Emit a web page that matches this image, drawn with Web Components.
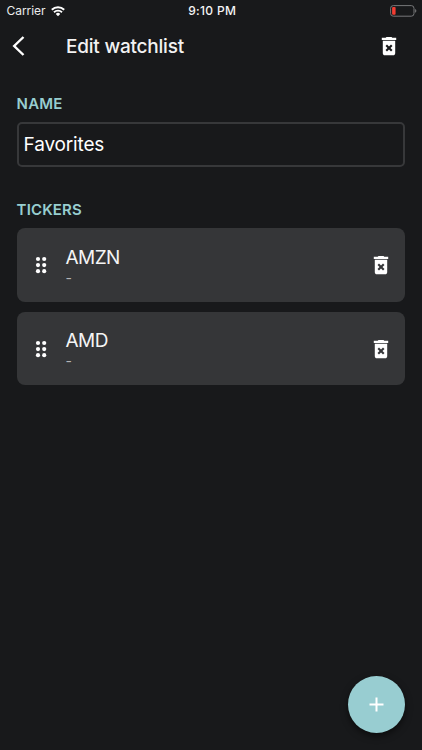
<!DOCTYPE html>
<html lang="en"><head><meta charset="utf-8"><title>Edit watchlist</title>
<style>body{margin:0;background:#18191b}</style></head><body>
<watchlist-screen></watchlist-screen>
<script>
const define=(name,html)=>customElements.define(name,class extends HTMLElement{
  constructor(){super();this.attachShadow({mode:'open'}).innerHTML=html;}
});
define('delete-icon',`<style>:host{display:block;width:24px;height:24px}svg{display:block}</style>
<svg width="24" height="24" viewBox="0 0 24 24" fill="#fff"><path d="M15.3 3.8l-.8-.8h-5l-.8.8H4.8v2.3h14.4V3.8z"/><path fill-rule="evenodd" d="M5.8 6.7V19.2c0 1.1.9 2.1 2 2.1h8.4c1.1 0 2-1 2-2.1V6.7zM8.5 12l1.5-1.5 2 2 2-2 1.5 1.5-2 2 2 2-1.5 1.5-2-2-2 2-1.5-1.5 2-2z"/></svg>`);
define('status-bar',`<style>
:host{display:grid;grid-template-columns:1fr auto 1fr;align-items:center;height:22px;padding:0 5px 0 6.5px;box-sizing:border-box;font-size:12px;line-height:22px;color:#ececec}
.l{display:flex;align-items:center;gap:5.5px}.c{letter-spacing:-.04px}.t{font-weight:500;font-size:12px;letter-spacing:.35px;color:#f4f4f4;padding-left:1px}
.b{justify-self:end}svg{display:block}</style>
<div class="l"><span class="c">Carrier</span><svg width="14" height="11" viewBox="0 0 14 11" fill="none" stroke="#fff" stroke-width="1.9"><path d="M.8 3.7a8.9 8.9 0 0 1 12.4 0M3 6.2a5.8 5.8 0 0 1 8 0"/><path d="M7 10.2L4.8 7.9a3.2 3.2 0 0 1 4.4 0z" fill="#fff" stroke="none"/></svg></div>
<span class="t">9:10 PM</span>
<svg class="b" width="27" height="12" viewBox="0 0 27 12"><rect x=".6" y=".6" width="23.4" height="10.6" rx="2.7" fill="none" stroke="#77787a"/><rect x="2.1" y="2.1" width="3.5" height="7.6" rx="1" fill="#f23c32"/><path d="M25.1 4.1c1.7.4 1.7 3.2 0 3.6z" fill="#77787a"/></svg>`);
define('nav-bar',`<style>
:host{display:flex;align-items:center;height:48px;padding:0 21px 0 12px;box-sizing:border-box}
h1{margin:0 0 0 41px;padding-top:2px;flex:1;font-size:19px;line-height:24px;font-weight:500;color:#f2f2f2;letter-spacing:-.22px}</style>
<svg width="13" height="20" viewBox="0 0 13 20" fill="none" stroke="#fff" stroke-width="2.4"><path d="M11.5 1L2.2 10l9.3 9"/></svg>
<h1><slot></slot></h1><delete-icon></delete-icon>`);
define('section-label',`<style>:host{display:block;font-size:15px;line-height:20px;font-weight:600;color:#97ced0;letter-spacing:.15px}</style><slot></slot>`);
define('text-field',`<style>:host{display:flex;align-items:center;box-sizing:border-box;height:45px;border:2px solid #37383a;border-radius:5px;padding:0 5px;font-size:19px;color:#fff;letter-spacing:-.16px}</style><slot></slot>`);
define('ticker-card',`<style>
:host{display:flex;align-items:center;box-sizing:border-box;height:73.5px;padding:0 12px 0 18px;border-radius:8px;background:#353638}
.n{flex:1;margin-left:18px}.s{font-size:19px;line-height:25px;color:#f4f4f4;letter-spacing:-.6px}.d{font-size:14px;line-height:16px;color:#b4b5b7}svg{display:block}</style>
<svg width="13" height="18" viewBox="0 0 13 18" fill="#fff"><circle cx="3" cy="3" r="2.1"/><circle cx="9.2" cy="3" r="2.1"/><circle cx="3" cy="9.1" r="2.1"/><circle cx="9.2" cy="9.1" r="2.1"/><circle cx="3" cy="15.2" r="2.1"/><circle cx="9.2" cy="15.2" r="2.1"/></svg>
<div class="n"><div class="s"><slot></slot></div><div class="d"><slot name="detail"></slot></div></div><delete-icon></delete-icon>`);
define('add-button',`<style>:host{display:grid;place-items:center;width:57px;height:57px;border-radius:50%;background:#98cdd1;box-shadow:0 3px 7px #0008}</style>
<svg width="15" height="15" viewBox="0 0 15 15" stroke="#fff" stroke-width="2"><path d="M7.5 .5v14M.5 7.5h14"/></svg>`);
define('watchlist-screen',`<style>
:host{display:flex;flex-direction:column;position:relative;width:422px;height:750px;background:#18191b;font-family:Inter,"Liberation Sans",sans-serif;overflow:hidden}
main{padding:23.5px 16.6px 0 16.6px;display:flex;flex-direction:column}
text-field{margin-top:8.9px}.tk{margin-top:32.6px}.cards{display:grid;gap:10px;margin-top:8.3px}
add-button{position:absolute;right:17px;bottom:16.7px}</style>
<status-bar></status-bar><nav-bar>Edit watchlist</nav-bar>
<main><section-label>NAME</section-label><text-field>Favorites</text-field>
<section-label class="tk">TICKERS</section-label>
<div class="cards"><ticker-card>AMZN<span slot="detail">-</span></ticker-card><ticker-card>AMD<span slot="detail">-</span></ticker-card></div></main>
<add-button></add-button>`);
</script></body></html>
